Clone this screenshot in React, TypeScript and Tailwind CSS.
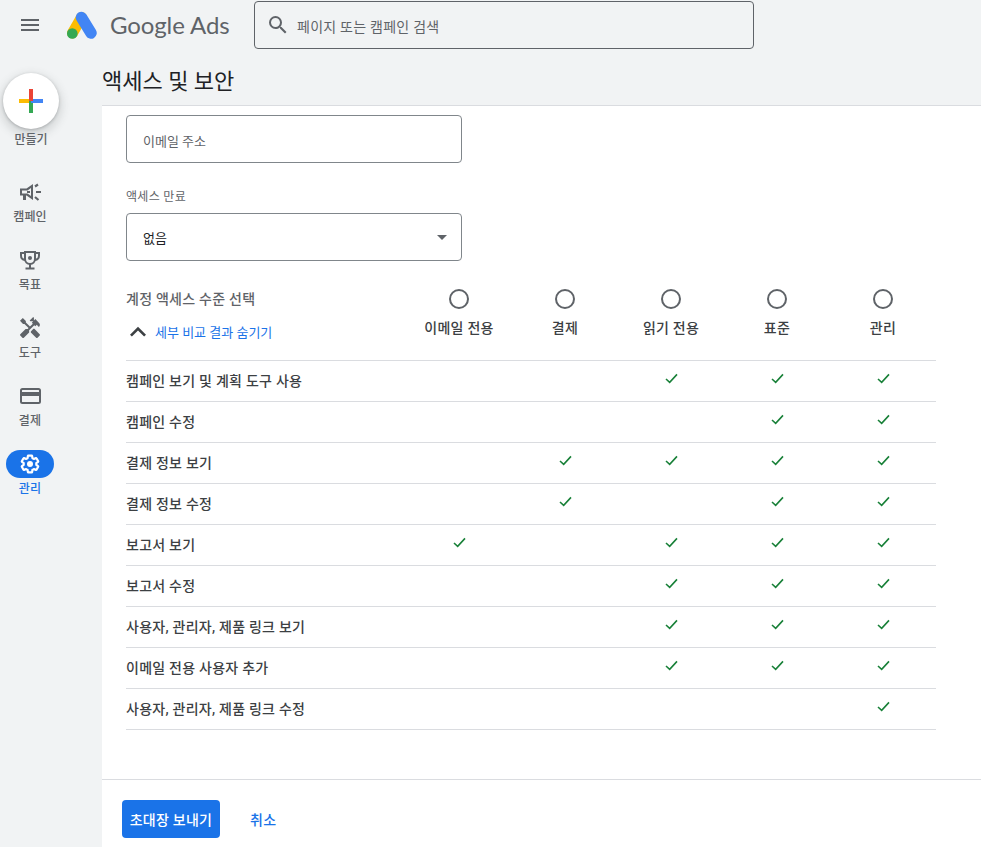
import { MdMenu, MdSearch, MdHandyman, MdArrowDropDown, MdExpandLess } from "react-icons/md";
import type { ReactNode } from "react";

const font = "[font-family:Roboto,'Noto_Sans_CJK_KR',sans-serif]";

function Check() {
  return (
    <svg width="13" height="11" viewBox="0 0 14 12" fill="none" className="mx-auto -translate-y-[3px]">
      <path d="M1 6.500 L5 10.200 L13 1.500" stroke="#188038" strokeWidth="1.700" />
    </svg>
  );
}

function Megaphone() {
  return (
    <svg width="24" height="24" viewBox="0 0 24 24" fill="currentColor">
      <path
        fillRule="evenodd"
        d="M2 8.500h6.500L15 4v16l-6.500-4.500H8V20H5v-4.500H2zM4 10.500v3h5.500l3.500 2.500V8l-3.500 2.500z"
      />
      <path d="M9 11h3v2H9z" />
      <path d="M17 6.500L20 4.500M18 12H23M17 17L20.500 20" stroke="currentColor" strokeWidth="2.200" fill="none" />
    </svg>
  );
}

function Trophy() {
  return (
    <svg width="24" height="24" viewBox="0 0 24 24" fill="none" stroke="currentColor" strokeWidth="2">
      <path d="M7 4h10v7a5 5 0 0 1-10 0z" />
      <path d="M7 5H3v2.500a4.500 4.500 0 0 0 4 4.500M17 5h4v2.500a4.500 4.500 0 0 1-4 4.500" />
      <path d="M12 16v4M7.500 20.500h9" />
      <circle cx="12" cy="10" r="2" fill="currentColor" stroke="none" />
    </svg>
  );
}

function Card() {
  return (
    <svg width="24" height="24" viewBox="0 0 24 24" fill="none">
      <rect x="3" y="5" width="19" height="14" rx="1.500" stroke="currentColor" strokeWidth="2" />
      <rect x="3" y="8" width="19" height="4" fill="currentColor" />
    </svg>
  );
}

function Gear() {
  return (
    <svg width="24" height="24" viewBox="0 0 24 24" fill="none">
      <g transform="translate(12 12) scale(0.88) translate(-12 -12)">
        <path
          stroke="currentColor"
          strokeWidth="2.500"
          strokeLinejoin="round"
          d="M19.140 12.940c.04-.3.06-.61.06-.94 0-.32-.02-.64-.07-.94l2.030-1.580c.18-.14.23-.41.12-.61l-1.920-3.320c-.12-.22-.37-.29-.59-.22l-2.390.96c-.5-.38-1.030-.7-1.620-.94l-.36-2.540c-.04-.24-.24-.41-.48-.41h-3.840c-.24 0-.43.17-.47.41l-.36 2.540c-.59.24-1.130.57-1.620.94l-2.390-.96c-.22-.08-.47 0-.59.22L2.740 8.870c-.12.21-.08.47.12.61l2.030 1.580c-.05.3-.09.63-.09.94s.02.64.07.94l-2.030 1.580c-.18.14-.23.41-.12.61l1.920 3.320c.12.22.37.29.59.22l2.390-.96c.5.38 1.030.7 1.620.94l.36 2.540c.05.24.24.41.48.41h3.840c.24 0 .44-.17.47-.41l.36-2.540c.59-.24 1.130-.56 1.620-.94l2.390.96c.22.08.47 0 .59-.22l1.920-3.320c.12-.22.07-.47-.12-.61l-2.010-1.580z"
        />
      </g>
      <circle cx="12" cy="12" r="3" fill="currentColor" />
    </svg>
  );
}

function NavItem({ icon, label, active }: { icon: ReactNode; label: string; active?: boolean }) {
  return (
    <div className="flex flex-col items-center h-[68px]">
      <div className={`w-12 h-7 rounded-full flex items-center justify-center ${active ? "bg-[#1a73e8] text-white" : "text-[#5f6368]"}`}>
        {icon}
      </div>
      <div className={`mt-[3px] text-xs leading-4 font-medium tracking-[0.1px] ${active ? "text-[#1a73e8]" : "text-[#5f6368]"}`}>{label}</div>
    </div>
  );
}

const rows: [string, boolean[]][] = [
  ["캠페인 보기 및 계획 도구 사용", [false, false, true, true, true]],
  ["캠페인 수정", [false, false, false, true, true]],
  ["결제 정보 보기", [false, true, true, true, true]],
  ["결제 정보 수정", [false, true, false, true, true]],
  ["보고서 보기", [true, false, true, true, true]],
  ["보고서 수정", [false, false, true, true, true]],
  ["사용자, 관리자, 제품 링크 보기", [false, false, true, true, true]],
  ["이메일 전용 사용자 추가", [false, false, true, true, true]],
  ["사용자, 관리자, 제품 링크 수정", [false, false, false, false, true]],
];

const levels = ["이메일 전용", "결제", "읽기 전용", "표준", "관리"];

export default function App() {
  return (
    <div className={`${font} w-[981px] h-[847px] overflow-hidden bg-[#f1f3f4] flex flex-col`}>
      <header className="h-[50px] shrink-0 flex items-center">
        <div className="w-[65px] pl-[18px] text-[#5f6368]">
          <MdMenu size={24} />
        </div>
        <svg width="34" height="30" viewBox="65 9 34 30">
          <path d="M81.500 16.500 L72.500 32" stroke="#fbbc04" strokeWidth="11" strokeLinecap="round" fill="none" />
          <path d="M81.500 16.500 L91 32" stroke="#4285f4" strokeWidth="11.500" strokeLinecap="round" fill="none" />
          <circle cx="72.300" cy="32.500" r="5.300" fill="#34a853" />
        </svg>
        <div className="ml-[11px] w-[144px] text-[24px] leading-7 text-[#5f6368] whitespace-nowrap tracking-[-0.1px] [font-family:Lato,sans-serif]">Google Ads</div>
        <div className="w-[500px] h-[48px] border border-[#5f6368] rounded flex items-center pl-[11px] text-[#5f6368]">
          <MdSearch size={24} className="shrink-0" />
          <span className="ml-[7px] pt-[4px] text-sm tracking-[0.25px] text-[#5f6368]">페이지 또는 캠페인 검색</span>
        </div>
      </header>
      <div className="flex flex-1 min-h-0">
        <aside className="w-[102px] shrink-0">
          <div className="w-[62px] flex flex-col items-center">
            <div className="mt-[23px] w-14 h-14 rounded-full bg-white shadow-[0_1px_3px_rgba(60,64,67,0.3),0_4px_8px_3px_rgba(60,64,67,0.15)] flex items-center justify-center">
              <svg width="24" height="24" viewBox="0 0 24 24">
                <rect x="0" y="10" width="12" height="4" fill="#fbbc04" />
                <rect x="10" y="12" width="4" height="12" fill="#34a853" />
                <rect x="12" y="10" width="12" height="4" fill="#4285f4" />
                <rect x="10" y="0" width="4" height="12" fill="#ea4335" />
              </svg>
            </div>
            <div className="mt-[2px] pt-[1px] h-4 text-xs leading-4 font-medium text-[#5f6368]">만들기</div>
            <div className="mt-[31px] flex flex-col w-[60px] self-start">
              <NavItem icon={<Megaphone />} label="캠페인" />
              <NavItem icon={<Trophy />} label="목표" />
              <NavItem icon={<MdHandyman size={24} />} label="도구" />
              <NavItem icon={<Card />} label="결제" />
              <NavItem icon={<Gear />} label="관리" active />
            </div>
          </div>
        </aside>
        <div className="flex-1 min-w-0 flex flex-col">
          <div className="h-[56px] shrink-0 border-b border-[#dadce0] flex items-center pt-[8px] text-[22px] text-[#202124]">
            액세스 및 보안
          </div>
          <main className="flex-1 bg-white flex flex-col">
            <div className="pl-6 pr-[45px] pt-[9px]">
              <div className="w-[336px] h-12 border border-[#80868b] rounded flex items-center pl-4 pt-[6px] text-[13px] text-[#5f6368]">이메일 주소</div>
              <div className="mt-[26px] h-4 text-xs leading-4 tracking-[0.3px] text-[#5f6368]">액세스 만료</div>
              <div className="mt-[8px] w-[336px] h-12 border border-[#80868b] rounded flex items-center justify-between pl-4 pr-[7px] text-[13px] text-[#202124]">
                <span className="pt-[4px]">없음</span>
                <MdArrowDropDown size={24} className="text-[#5f6368]" />
              </div>
              <div className="mt-[27px] h-[72px] flex">
                <div className="w-[280px] pt-[1px]">
                  <div className="text-sm tracking-[0.25px] leading-5 text-[#5f6368] font-medium">계정 액세스 수준 선택</div>
                  <div className="mt-[12px] flex items-center text-[13px] leading-5 text-[#1a73e8]">
                    <MdExpandLess size={32} className="text-[#3c4043] -m-1 -translate-y-px" />
                    <span className="ml-[5px]">세부 비교 결과 숨기기</span>
                  </div>
                </div>
                {levels.map((l) => (
                  <div key={l} className="w-[106px] flex flex-col items-center pt-[1px]">
                    <div className="w-5 h-5 rounded-full border-2 border-[#5f6368]" />
                    <div className="mt-[9px] text-sm tracking-[0.25px] leading-5 font-medium text-[#3c4043]">{l}</div>
                  </div>
                ))}
              </div>
              <div className="border-t border-[#dadce0]">
                {rows.map(([label, checks]) => (
                  <div key={label} className="h-[41px] border-b border-[#dadce0] flex items-center">
                    <div className="w-[280px] text-sm tracking-[0.25px] font-medium text-[#3c4043]">{label}</div>
                    {checks.map((c, i) => (
                      <div key={i} className="w-[106px]">{c && <Check />}</div>
                    ))}
                  </div>
                ))}
              </div>
            </div>
            <footer className="mt-[49px] border-t border-[#dadce0] flex items-center pl-5 pt-5">
              <button className="w-[98px] h-[38px] rounded bg-[#1a73e8] text-white text-sm tracking-[0.25px] font-medium pt-px">초대장 보내기</button>
              <span className="ml-[30px] pt-px text-sm tracking-[0.25px] font-medium text-[#1a73e8]">취소</span>
            </footer>
          </main>
        </div>
      </div>
    </div>
  );
}
